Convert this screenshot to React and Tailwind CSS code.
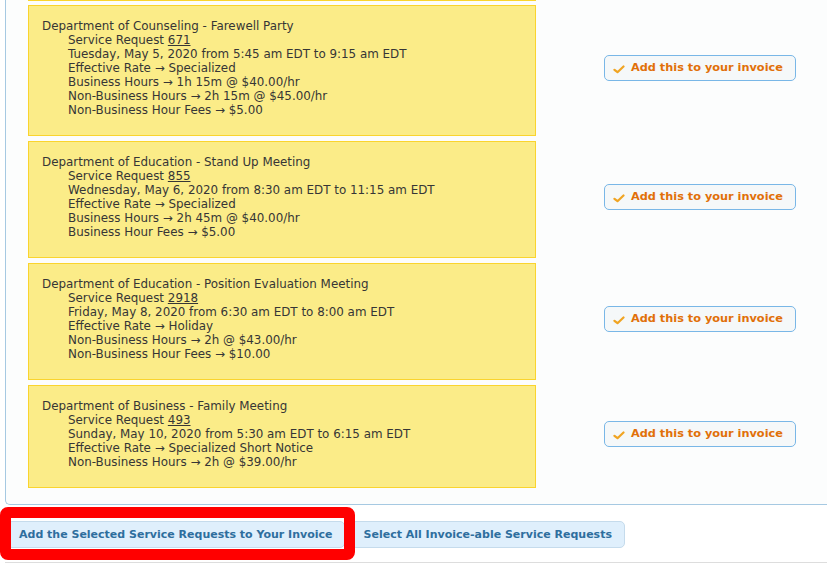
import React from "react";

const rows = [
  {
    title: "Department of Counseling - Farewell Party",
    sr: "671",
    lines: [
      "Tuesday, May 5, 2020 from 5:45 am EDT to 9:15 am EDT",
      "Effective Rate \u2192 Specialized",
      "Business Hours \u2192 1h 15m @ $40.00/hr",
      "Non-Business Hours \u2192 2h 15m @ $45.00/hr",
      "Non-Business Hour Fees \u2192 $5.00",
    ],
  },
  {
    title: "Department of Education - Stand Up Meeting",
    sr: "855",
    lines: [
      "Wednesday, May 6, 2020 from 8:30 am EDT to 11:15 am EDT",
      "Effective Rate \u2192 Specialized",
      "Business Hours \u2192 2h 45m @ $40.00/hr",
      "Business Hour Fees \u2192 $5.00",
    ],
  },
  {
    title: "Department of Education - Position Evaluation Meeting",
    sr: "2918",
    lines: [
      "Friday, May 8, 2020 from 6:30 am EDT to 8:00 am EDT",
      "Effective Rate \u2192 Holiday",
      "Non-Business Hours \u2192 2h @ $43.00/hr",
      "Non-Business Hour Fees \u2192 $10.00",
    ],
  },
  {
    title: "Department of Business - Family Meeting",
    sr: "493",
    lines: [
      "Sunday, May 10, 2020 from 5:30 am EDT to 6:15 am EDT",
      "Effective Rate \u2192 Specialized Short Notice",
      "Non-Business Hours \u2192 2h @ $39.00/hr",
    ],
  },
];

function Check() {
  return (
    <svg width="12" height="10" viewBox="0 0 12 10" className="shrink-0 mt-[2px]">
      <path d="M1.5 5.8 L4.5 8.2 L10.5 2.5" fill="none" stroke="#f0a422" strokeWidth="2.2" strokeLinecap="round" strokeLinejoin="round" />
    </svg>
  );
}

export default function App() {
  return (
    <div className="w-[827px] h-[567px] overflow-hidden bg-white font-['DejaVu_Sans',sans-serif]">
      <div className="ml-[5px] w-[830px] border-l border-b border-[#a6c9e2] rounded-bl-[5px] bg-[#fcfdfd] pl-[22px] pb-[16px]">
        <div className="w-[508px] h-px bg-[#fad42e]" />
        <div className="mt-[4px] flex flex-col gap-[5px]">
          {rows.map((r) => (
            <div key={r.sr} className="flex items-center">
              <div className="w-[508px] shrink-0 border border-[#fad42e] bg-[#fbec88] pt-[13px] pb-[18px] pl-[13px] text-[#363636] text-[11.9px] leading-[14px]">
                <div>{r.title}</div>
                <div className="pl-[26px]">
                  <div>
                    Service Request <span className="underline">{r.sr}</span>
                  </div>
                  {r.lines.map((l) => (
                    <div key={l}>{l}</div>
                  ))}
                </div>
              </div>
              <div className="ml-[68px] mb-[5px] w-[192px] h-[26px] shrink-0 border border-[#79b7e7] rounded-[5px] bg-[#f5f8f9] flex items-center pl-[8px] gap-[6px]">
                <Check />
                <span className="text-[#e17009] font-bold text-[11.3px] leading-none">Add this to your invoice</span>
              </div>
            </div>
          ))}
        </div>
      </div>
      <div className="relative ml-[5px] pt-[16px] pb-[14px] border-b border-[#dddddd]">
        <div className="ml-[2px] flex gap-[6px]">
          <div className="h-[27px] border border-[#c5dbec] rounded-[5px] bg-[#dfeffc] pl-[11px] pr-[11px] flex items-center text-[#2e6e9e] font-bold text-[11px] leading-none">
            Add the Selected Service Requests to Your Invoice
          </div>
          <div className="h-[27px] border border-[#c5dbec] rounded-[5px] bg-[#dfeffc] pl-[12px] pr-[12px] flex items-center text-[#2e6e9e] font-bold text-[11px] leading-none">
            Select All Invoice-able Service Requests
          </div>
        </div>
        <div className="absolute left-[-5px] top-[2px] w-[355px] h-[53px] border-[11px] border-[#ff0000] rounded-[8px]" />
      </div>
    </div>
  );
}
